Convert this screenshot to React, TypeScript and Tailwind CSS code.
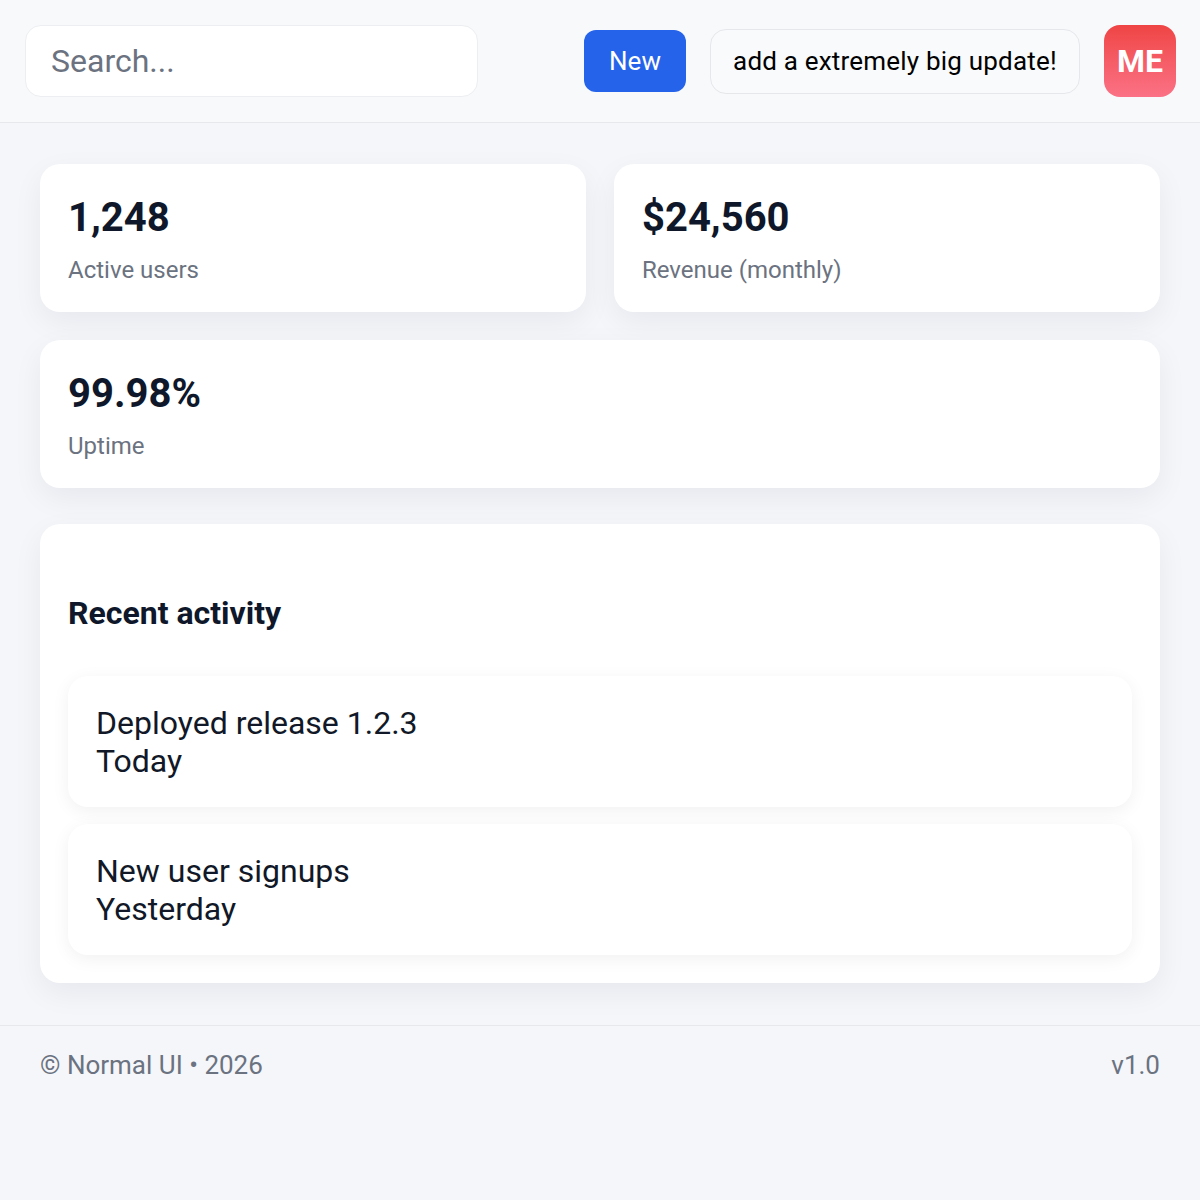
import React from 'react';

const stats = [
  { value: '1,248', label: 'Active users' },
  { value: '$24,560', label: 'Revenue (monthly)' },
];

const activity = [
  { title: 'Deployed release 1.2.3', when: 'Today' },
  { title: 'New user signups', when: 'Yesterday' },
];

export default function App() {
  return (
    <div className="min-h-[1200px] bg-[#f4f6fa] font-['Roboto',sans-serif] text-[#0f172a]">
      {/* top bar */}
      <header className="flex h-[123px] items-center justify-between border-b border-[#e6e8ec] bg-[#f8f9fb] pl-[25px] pr-[24px]">
        <input
          placeholder="Search..."
          className="h-[72px] w-[453px] rounded-2xl border border-[#eceef1] bg-white px-[25px] text-[32px] text-[#111827] outline-none placeholder:text-[#6b7280]"
        />
        <div className="flex items-center gap-6">
          <button className="h-[62px] w-[102px] rounded-xl bg-[#2563eb] text-[26px] text-white">New</button>
          <button className="h-[65px] w-[370px] rounded-2xl border border-[#e5e7eb] bg-[#f9fafb] text-[26px] tracking-[0.2px] text-black">
            add a extremely big update!
          </button>
          <div className="flex h-[72px] w-[72px] items-center justify-center rounded-2xl bg-gradient-to-b from-[#ef4444] to-[#fb7185] text-[32px] font-bold text-white">
            ME
          </div>
        </div>
      </header>

      <main className="flex flex-col gap-7 px-10 pt-[41px] pb-[42px]">
        <div className="grid grid-cols-2 gap-7">
          {stats.map((s) => (
            <StatCard key={s.label} value={s.value} label={s.label} />
          ))}
        </div>
        <StatCard value="99.98%" label="Uptime" />

        <section className="mt-2 rounded-[20px] bg-white p-7 shadow-[0_10px_30px_rgba(15,23,42,0.06)]">
          <h2 className="mt-[41px] mb-[43px] text-[32px] font-bold leading-10">Recent activity</h2>
          <div className="flex flex-col gap-[17px]">
            {activity.map((a) => (
              <div
                key={a.title}
                className="flex h-[131px] flex-col justify-center rounded-[20px] bg-white px-7 text-[32px] leading-[38px] text-[#111827] shadow-[0_4px_18px_rgba(15,23,42,0.06)]"
              >
                <p>{a.title}</p>
                <p>{a.when}</p>
              </div>
            ))}
          </div>
        </section>
      </main>

      <footer className="flex h-[80px] items-center justify-between border-t border-[#e6e8ec] px-10 text-[26px] text-[#6b7280]">
        <span>© Normal UI • 2026</span>
        <span>v1.0</span>
      </footer>
    </div>
  );
}

function StatCard({ value, label }: { value: string; label: string }) {
  return (
    <div className="flex h-[148px] flex-col rounded-[20px] bg-white px-7 pt-[30px] shadow-[0_10px_30px_rgba(15,23,42,0.06)]">
      <p className="text-[40px] font-bold leading-[48px] text-[#0f172a]">{value}</p>
      <p className="mt-[12px] text-[24px] leading-8 text-[#6b7280]">{label}</p>
    </div>
  );
}
